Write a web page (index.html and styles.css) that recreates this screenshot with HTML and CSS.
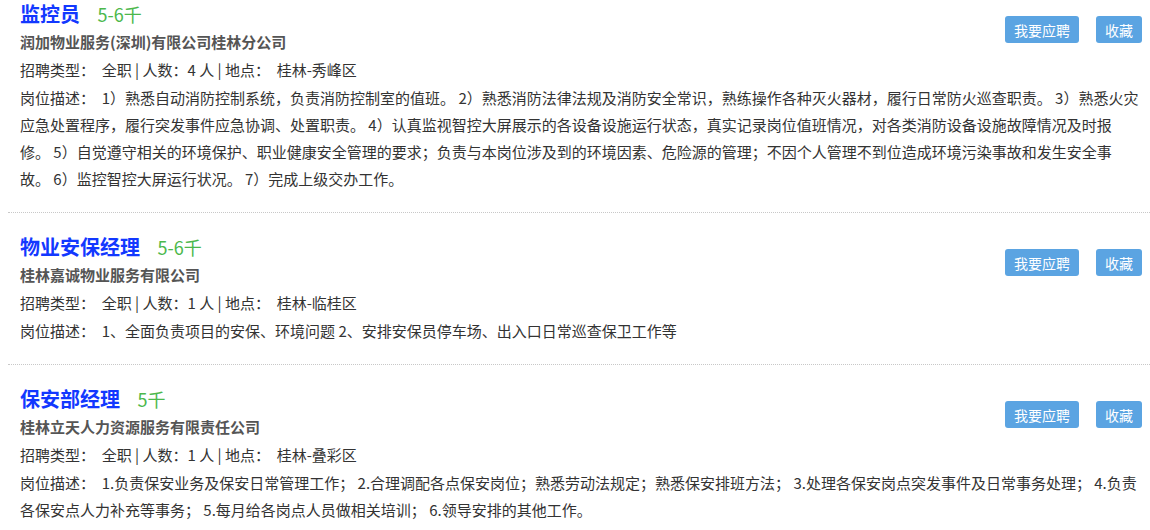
FILE: index.html
```html
<!DOCTYPE html>
<html lang="zh-CN">

<head>
  <meta charset="UTF-8">
  <meta name="viewport" content="width=device-width, initial-scale=1.0">
  <title>招聘信息</title>
  <link rel="stylesheet" href="styles.css">
</head>

<body>
  <ul class="job-list">
    <li class="job">
      <div class="job-head">
        <div class="job-main">
          <h2 class="job-title">监控员 <span class="salary">5-6千</span></h2>
          <p class="company">润加物业服务(深圳)有限公司桂林分公司</p>
        </div>
        <div class="job-actions">
          <button class="btn">我要应聘</button>
          <button class="btn">收藏</button>
        </div>
      </div>
      <p class="job-info">招聘类型：&nbsp; 全职 | 人数：4 人 | 地点：&nbsp; 桂林-秀峰区</p>
      <p class="job-desc">岗位描述：&nbsp; 1）熟悉自动消防控制系统，负责消防控制室的值班。 2）熟悉消防法律法规及消防安全常识，熟练操作各种灭火器材，履行日常防火巡查职责。 3）熟悉火灾应急处置程序，履行突发事件应急协调、处置职责。 4）认真监视智控大屏展示的各设备设施运行状态，真实记录岗位值班情况，对各类消防设备设施故障情况及时报修。 5）自觉遵守相关的环境保护、职业健康安全管理的要求；负责与本岗位涉及到的环境因素、危险源的管理；不因个人管理不到位造成环境污染事故和发生安全事故。 6）监控智控大屏运行状况。 7）完成上级交办工作。</p>
    </li>

    <li class="job">
      <div class="job-head">
        <div class="job-main">
          <h2 class="job-title">物业安保经理 <span class="salary">5-6千</span></h2>
          <p class="company">桂林嘉诚物业服务有限公司</p>
        </div>
        <div class="job-actions">
          <button class="btn">我要应聘</button>
          <button class="btn">收藏</button>
        </div>
      </div>
      <p class="job-info">招聘类型：&nbsp; 全职 | 人数：1 人 | 地点：&nbsp; 桂林-临桂区</p>
      <p class="job-desc">岗位描述：&nbsp; 1、全面负责项目的安保、环境问题 2、安排安保员停车场、出入口日常巡查保卫工作等</p>
    </li>

    <li class="job">
      <div class="job-head">
        <div class="job-main">
          <h2 class="job-title">保安部经理 <span class="salary">5千</span></h2>
          <p class="company">桂林立天人力资源服务有限责任公司</p>
        </div>
        <div class="job-actions">
          <button class="btn">我要应聘</button>
          <button class="btn">收藏</button>
        </div>
      </div>
      <p class="job-info">招聘类型：&nbsp; 全职 | 人数：1 人 | 地点：&nbsp; 桂林-叠彩区</p>
      <p class="job-desc">岗位描述：&nbsp; 1.负责保安业务及保安日常管理工作； 2.合理调配各点保安岗位；熟悉劳动法规定；熟悉保安排班方法； 3.处理各保安岗点突发事件及日常事务处理； 4.负责各保安点人力补充等事务； 5.每月给各岗点人员做相关培训； 6.领导安排的其他工作。</p>
    </li>
  </ul>
</body>

</html>
```

FILE: styles.css
```css
* {
  box-sizing: border-box;
  margin: 0;
  padding: 0;
  font-family: "Microsoft YaHei", "Noto Sans CJK SC", "Noto Sans", sans-serif;
}

body {
  background: #fff;
  color: #333;
  font-size: 15px;
  overflow: hidden;
}

.job-list {
  list-style: none;
  margin-left: 8px;
}

.job {
  padding: 20px 11px 20px 12px;
  border-bottom: 1px dotted #c8c8c8;
}

.job:first-child {
  padding-top: 0;
}

.job-head {
  display: flex;
  align-items: center;
  justify-content: space-between;
}

.job-title {
  font-size: 20px;
  font-weight: bold;
  line-height: 28px;
  color: #1238ff;
}

.salary {
  margin-left: 13px;
  font-size: 18px;
  font-weight: normal;
  color: #4cb84c;
}

.company {
  font-weight: bold;
  color: #555;
  line-height: 27px;
}

.job-actions {
  display: flex;
  gap: 17px;
  margin-top: 4px;
  margin-right: -3px;
}

.btn {
  background: #5ba4e2;
  color: #fff;
  border: none;
  border-radius: 3px;
  height: 27px;
  padding: 0 9px;
  font-size: 14px;
  cursor: pointer;
}

.job-info {
  line-height: 29px;
}

.job-desc {
  line-height: 27px;
}
```
